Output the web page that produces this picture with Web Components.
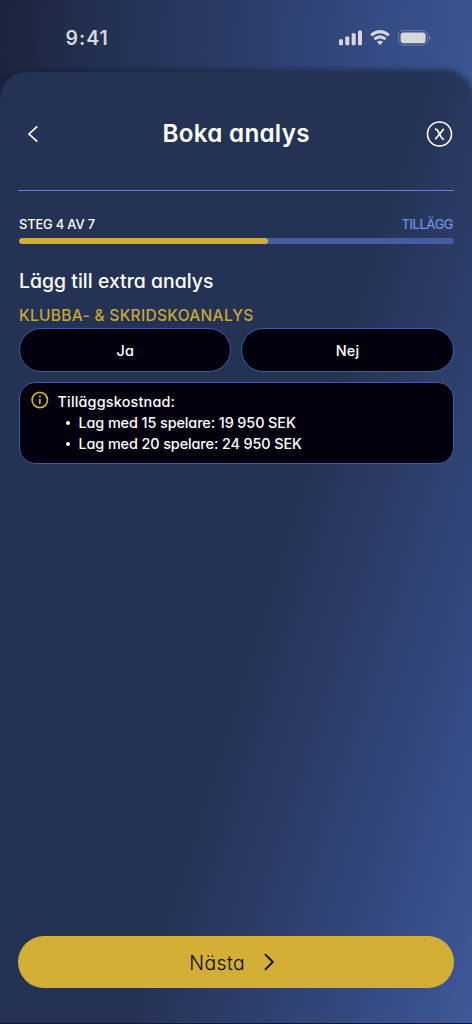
<!DOCTYPE html>
<html lang="sv">
<head>
<meta charset="utf-8">
<title>Boka analys</title>
<style>
html,body{margin:0;padding:0;background:#1b2540}
body{width:472px;height:1024px;overflow:hidden;font-family:Inter,"Liberation Sans",sans-serif;font-feature-settings:"cv11";color:#fff}
</style>
</head>
<body>
<booking-app></booking-app>
<script>
const define = (name, html, setup) => customElements.define(name, class extends HTMLElement {
  connectedCallback() {
    if (this.shadowRoot) return;
    const t = document.createElement('template');
    t.innerHTML = html;
    this.attachShadow({mode: 'open'}).append(t.content.cloneNode(true));
    if (setup) setup(this, this.shadowRoot);
  }
});

define('status-bar', `<style>
:host{display:flex;box-sizing:border-box;height:72px;padding:24px 41px 0 65.5px;justify-content:space-between;align-items:flex-start;color:#d7d8dd}
.time{font-size:19.5px;font-weight:600;line-height:28px;font-feature-settings:normal}
svg{display:block;margin-top:4px}
</style>
<div class="time"><tracked-text measure="42.3">9:41</tracked-text></div>
<svg width="93" height="20" viewBox="338 28 93 20" fill="#d7d8dd">
<rect x="339" y="39.3" width="4" height="5.9" rx="1.2"/><rect x="345.3" y="36.5" width="4" height="8.7" rx="1.2"/><rect x="351.7" y="33.3" width="4" height="11.9" rx="1.2"/><rect x="358" y="30.5" width="4" height="14.7" rx="1.2"/>
<g fill="none" stroke="#d7d8dd" stroke-width="3"><path d="M371.2 35.3Q380 28 388.8 35.3"/><path d="M374.4 39.1Q380 34.7 385.6 39.1"/></g>
<path d="M377 42Q380 39.6 383 42L380 45.1Z"/>
<rect x="398.6" y="30.6" width="28.8" height="14.6" rx="4.7" fill="none" stroke="#929bb9" stroke-opacity=".6"/>
<rect x="400.6" y="32.5" width="25" height="10.8" rx="3"/>
<path d="M428.8 35.8Q430.4 36.3 430.4 38Q430.4 39.7 428.8 40.2Z" fill="#929bb9" fill-opacity=".65"/>
</svg>`);

define('sheet-header', `<style>
:host{display:grid;grid-template-columns:40px 1fr 40px;align-items:start;height:119px;box-sizing:border-box;padding-top:44px;border-bottom:1px solid #6082d2;margin:0 18px}
h1{margin:2px 0 0;text-align:center;font-size:24.2px;font-weight:600;line-height:32px}
svg{display:block}
svg:last-child{justify-self:end}
</style>
<svg width="30" height="36" viewBox="18 116 30 36" fill="none" stroke="#fff" stroke-width="1.7"><path d="M37.3 126.3L29 134L37.3 141.7"/></svg>
<h1><slot></slot></h1>
<svg width="30" height="36" viewBox="424 116 30 36" fill="none" stroke="#fff"><circle cx="439.5" cy="134" r="12" stroke-width="1.6"/><path stroke-width="1.7" d="M435 129.1Q436.7 129 437.4 130.2L441.7 137.8Q442.5 139.2 444.2 139.1M443.8 128.9L435.3 139.3"/></svg>`);

define('step-progress', `<style>
:host{display:block;margin:25.3px 18.5px 0 19px}
.labels{display:flex;justify-content:space-between;font-size:12.9px;line-height:18px;font-weight:500}
.now{color:#7090e0}
.track{height:6px;margin-top:4.2px;border-radius:3px;background:#425da3;overflow:hidden}
.fill{width:57.3%;height:100%;border-radius:3px;background:#d4af37}
</style>
<div class="labels"><tracked-text measure="76">STEG 4 AV 7</tracked-text><tracked-text class="now" measure="52">TILLÄGG</tracked-text></div>
<div class="track"><div class="fill"></div></div>`);

define('choice-pill', `<style>
:host{display:flex;flex:1;box-sizing:border-box;height:44.5px;align-items:center;justify-content:center;border:1px solid #3f5ba7;border-radius:22.3px;background:#04010e;font-size:14.4px;font-weight:500}
</style><slot></slot>`);

define('info-card', `<style>
:host{display:flex;box-sizing:border-box;height:82px;margin-top:9.7px;padding:8.4px 0 0 11px;border:1px solid #3f5ba7;border-radius:16px;background:#04010e;font-size:14.4px;font-weight:500;line-height:21px}
svg{flex:none;margin-right:9px}
ul{list-style:none;margin:0;padding:0}
li{display:flex;align-items:center}
li::before{content:"";width:4px;height:4px;border-radius:2px;background:#fff;margin:0 8.2px 0 8.3px}
.title{margin-left:-.5px}
</style>
<svg width="18" height="18" viewBox="0 0 18 18" fill="none" stroke="#d4af37"><circle cx="8.8" cy="9" r="7.7" stroke-width="1.7"/><path d="M8.8 7.9v5.1" stroke-width="1.8"/><circle cx="8.8" cy="5.5" r="1.1" fill="#d4af37" stroke="none"/></svg>
<div><div class="title"><tracked-text measure="117.5">Tilläggskostnad:</tracked-text></div>
<ul><li><tracked-text measure="217.3">Lag med 15 spelare: 19 950 SEK</tracked-text></li><li><tracked-text measure="223.5">Lag med 20 spelare: 24 950 SEK</tracked-text></li></ul></div>`);

define('addon-form', `<style>
:host{display:block;margin:23.9px 18.5px 0 19px}
h2,h3{margin:0;font-weight:500}
h2{font-size:19.4px;line-height:26px}
h3{font-size:15.5px;line-height:22px;margin-top:10.6px;color:#c9a635}
.choices{display:flex;gap:10px;margin-top:.8px}
</style>
<h2><tracked-text measure="194.5">Lägg till extra analys</tracked-text></h2>
<h3><tracked-text measure="234.3">KLUBBA- &amp; SKRIDSKOANALYS</tracked-text></h3>
<div class="choices"><choice-pill><tracked-text measure="17.5">Ja</tracked-text></choice-pill><choice-pill><tracked-text measure="23.5">Nej</tracked-text></choice-pill></div>
<info-card></info-card>`);

define('next-button', `<style>
:host{display:flex;align-items:center;height:52.2px;margin:auto 18px 34.8px 18.3px;box-sizing:border-box;padding:1px 0 0 171px;border-radius:26.1px;background:#d4af37;color:#0b0810;font-size:19.4px;font-weight:300}
svg{margin:-1px 0 0 15.7px;flex:none}
</style><tracked-text measure="55.5">Nästa</tracked-text>
<svg width="18" height="24" viewBox="0 0 18 24" fill="none" stroke="#0b0810" stroke-width="1.8"><path d="M4 4.2L11.8 12L4 19.8"/></svg>`);

define('booking-app', `<style>
:host{display:flex;flex-direction:column;width:472px;height:1024px;overflow:hidden;background:linear-gradient(96deg,#1a243c 0,#233153 110px,#2b3c68 238px,#364c85 390px,#3a5592 472px)}
main{display:flex;flex-direction:column;flex:1;box-sizing:border-box;border-radius:27px 27px 0 0;border-bottom:1px solid #151735;background:linear-gradient(107.3deg,#243254 0,#243254 55%,#2d3e6b 70%,#344980 84%,#3f5999 100%);box-shadow:0 -1px 6px rgba(20,25,48,.8)}
</style>
<status-bar></status-bar>
<main><sheet-header><tracked-text measure="147">Boka analys</tracked-text></sheet-header><step-progress></step-progress><addon-form></addon-form><next-button></next-button></main>`);

/* Single line of text whose tracking is adjusted to fill the "measure" width.
   Defined last, so that it measures with its surroundings in place. */
define('tracked-text', `<style>
:host{display:inline-block;white-space:pre;flex:none}
span{display:inline-block;white-space:pre}
</style><span><slot></slot></span>`, (host, root) => {
  const span = root.querySelector('span');
  const gap = (parseFloat(host.getAttribute('measure')) - span.getBoundingClientRect().width) / (host.textContent.length - 1);
  span.style.letterSpacing = gap + 'px';
  span.style.marginRight = -gap + 'px';
});
</script>
</body>
</html>
